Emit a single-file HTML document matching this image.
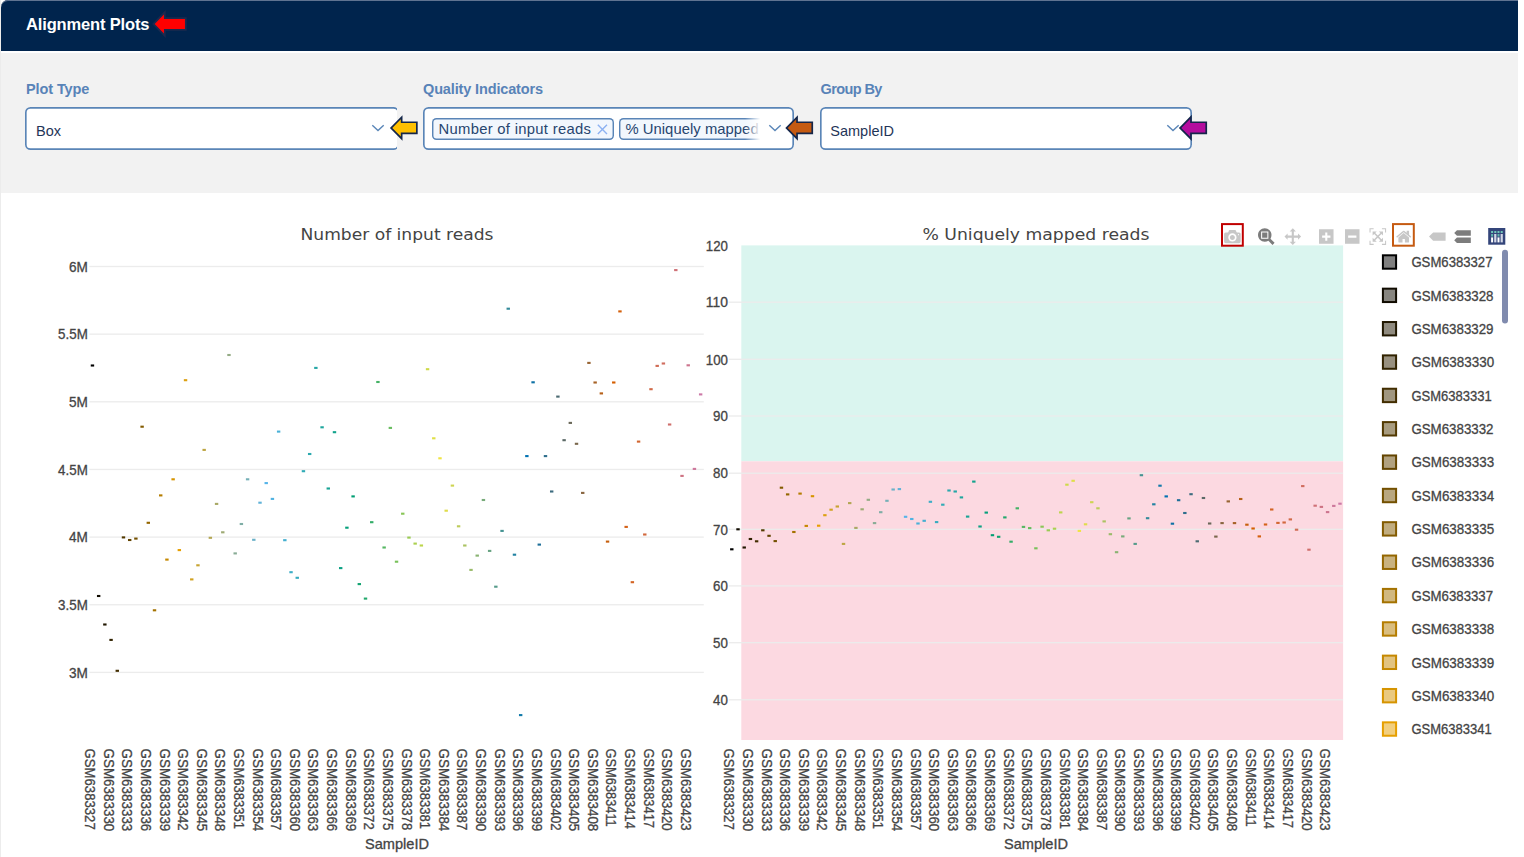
<!DOCTYPE html>
<html lang="en"><head><meta charset="utf-8"><title>Alignment Plots</title>
<style>
html,body{margin:0;padding:0;background:#fff;}
body{width:1524px;height:857px;overflow:hidden;position:relative;font-family:'Liberation Sans', sans-serif;}
.card{position:absolute;left:0;top:0;width:1517px;height:857px;border-left:1px solid #ececec;}
.hdr{position:absolute;left:0;top:0;width:1517px;height:51px;background:#00244d;border-top-left-radius:7px;box-shadow:inset 0 1px 0 #5f7391;}
.hdr h1{position:absolute;left:25px;top:13.5px;margin:0;font-size:16.5px;line-height:20px;font-weight:bold;color:#fff;white-space:nowrap;letter-spacing:-0.15px}
.panel{position:absolute;left:0;top:53px;width:1517px;height:139.5px;background:#f2f2f2;}
.lbl{position:absolute;top:78.6px;font-size:14.5px;line-height:20px;font-weight:bold;color:#5883b8;white-space:nowrap;}
.clip{position:absolute;top:105px;height:48px;overflow:hidden;}
.sel{position:absolute;top:107px;height:43px;width:372px;box-sizing:border-box;background:#fff;border-radius:5.5px;box-shadow:inset 0 0 0 1.65px #5a85b7;}
.clip .sel{top:2px;left:0;width:374px}
.sel .val{position:absolute;left:11px;top:13.9px;font-size:14.5px;line-height:20px;color:#1f3558;white-space:nowrap;}
.chev{position:absolute;left:345.8px;top:17px;width:14px;height:8px;}
.chip{position:absolute;top:11px;height:22px;box-sizing:border-box;border-radius:4.5px;background:#f2f7fd;box-shadow:inset 0 0 0 1.45px #5a85b7;font-size:14.8px;line-height:18px;color:#27456f;white-space:nowrap;overflow:hidden;}
.chip span{position:absolute;top:1.6px;}
.fade{position:absolute;top:9.3px;left:322px;width:19px;height:26px;background:linear-gradient(to right,rgba(255,255,255,0),#fff 80%);}
svg.plot{position:absolute;left:0;top:0;}
svg.ov{position:absolute;left:0;top:0;}
</style></head><body>
<div class="card">
 <div class="hdr"><h1>Alignment Plots</h1></div>
 <div class="panel"></div>
 <div class="lbl" style="left:25px;letter-spacing:-0.1px">Plot Type</div>
 <div class="lbl" style="left:422px;letter-spacing:-0.14px">Quality Indicators</div>
 <div class="lbl" style="left:819.5px;letter-spacing:-0.6px">Group By</div>
 <div class="clip" style="left:24px;width:372px"><div class="sel"><span class="val">Box</span><svg class="chev" style="left:346.3px" viewBox="0 0 14 8"><path d="M1.3 1.2 L7 6.6 L12.7 1.2" fill="none" stroke="#5a86b8" stroke-width="1.4"/></svg></div></div>
 <div class="sel" style="left:422px;width:371px">
   <div class="chip" style="left:9px;width:182px"><span style="left:6.5px;letter-spacing:0.3px">Number of input reads</span>
     <svg style="position:absolute;left:164.8px;top:6.4px" width="11" height="11" viewBox="0 0 11 11"><path d="M0.8 0.8 L10 10 M10 0.8 L0.8 10" stroke="#8db2f2" stroke-width="1.4" fill="none"/></svg></div>
   <div class="chip" style="left:196px;width:143px;border-radius:4.5px 0 0 4.5px"><span style="left:6.4px;letter-spacing:0.05px">% Uniquely mapped reads</span></div>
   <div class="fade"></div>
   <svg class="chev" style="left:345.3px" viewBox="0 0 14 8"><path d="M1.3 1.2 L7 6.6 L12.7 1.2" fill="none" stroke="#5a86b8" stroke-width="1.4"/></svg></div>
 <div class="sel" style="left:819px"><span class="val" style="left:10.3px">SampleID</span><svg class="chev" viewBox="0 0 14 8"><path d="M1.3 1.2 L7 6.6 L12.7 1.2" fill="none" stroke="#5a86b8" stroke-width="1.4"/></svg></div>
</div>
<svg class="plot" width="1524" height="857" viewBox="0 0 1524 857">
<rect x="741.3" y="245.4" width="601.8" height="215.9" fill="#daf5ef"/>
<rect x="741.3" y="461.3" width="601.8" height="278.7" fill="#fcd9e1"/>
<rect x="89.4" y="265.85" width="614.4" height="1.3" fill="#ececec"/>
<rect x="89.4" y="333.50" width="614.4" height="1.3" fill="#ececec"/>
<rect x="89.4" y="401.15" width="614.4" height="1.3" fill="#ececec"/>
<rect x="89.4" y="468.80" width="614.4" height="1.3" fill="#ececec"/>
<rect x="89.4" y="536.45" width="614.4" height="1.3" fill="#ececec"/>
<rect x="89.4" y="604.10" width="614.4" height="1.3" fill="#ececec"/>
<rect x="89.4" y="671.75" width="614.4" height="1.3" fill="#ececec"/>
<rect x="728.7" y="301.55" width="614.4" height="1.3" fill="#ececec"/>
<rect x="728.7" y="358.65" width="614.4" height="1.3" fill="#ececec"/>
<rect x="728.7" y="415.35" width="614.4" height="1.3" fill="#ececec"/>
<rect x="728.7" y="472.55" width="614.4" height="1.3" fill="#ececec"/>
<rect x="728.7" y="528.65" width="614.4" height="1.3" fill="#ececec"/>
<rect x="728.7" y="585.25" width="614.4" height="1.3" fill="#ececec"/>
<rect x="728.7" y="642.05" width="614.4" height="1.3" fill="#ececec"/>
<rect x="728.7" y="699.15" width="614.4" height="1.3" fill="#ececec"/>
<g font-family="'Liberation Sans', sans-serif" font-size="14.2" fill="#444444" stroke="#444444" stroke-width="0.3" text-anchor="end">
<text x="87.8" y="271.7" textLength="18.9" lengthAdjust="spacingAndGlyphs">6M</text>
<text x="87.8" y="339.3" textLength="29.7" lengthAdjust="spacingAndGlyphs">5.5M</text>
<text x="87.8" y="407.0" textLength="18.9" lengthAdjust="spacingAndGlyphs">5M</text>
<text x="87.8" y="474.7" textLength="29.7" lengthAdjust="spacingAndGlyphs">4.5M</text>
<text x="87.8" y="542.3" textLength="18.9" lengthAdjust="spacingAndGlyphs">4M</text>
<text x="87.8" y="610.0" textLength="29.7" lengthAdjust="spacingAndGlyphs">3.5M</text>
<text x="87.8" y="677.6" textLength="18.9" lengthAdjust="spacingAndGlyphs">3M</text>
<text x="727.9" y="250.6" textLength="22.1" lengthAdjust="spacingAndGlyphs">120</text>
<text x="727.9" y="307.4" textLength="22.1" lengthAdjust="spacingAndGlyphs">110</text>
<text x="727.9" y="364.5" textLength="22.1" lengthAdjust="spacingAndGlyphs">100</text>
<text x="727.9" y="421.2" textLength="14.8" lengthAdjust="spacingAndGlyphs">90</text>
<text x="727.9" y="478.4" textLength="14.8" lengthAdjust="spacingAndGlyphs">80</text>
<text x="727.9" y="534.5" textLength="14.8" lengthAdjust="spacingAndGlyphs">70</text>
<text x="727.9" y="591.1" textLength="14.8" lengthAdjust="spacingAndGlyphs">60</text>
<text x="727.9" y="647.9" textLength="14.8" lengthAdjust="spacingAndGlyphs">50</text>
<text x="727.9" y="705.0" textLength="14.8" lengthAdjust="spacingAndGlyphs">40</text>
</g>
<g font-family="'DejaVu Sans', sans-serif" font-size="16" fill="#444444" text-anchor="middle">
<text x="397" y="239.9" textLength="193" lengthAdjust="spacingAndGlyphs">Number of input reads</text>
<text x="1036" y="239.9" textLength="227" lengthAdjust="spacingAndGlyphs">% Uniquely mapped reads</text>
</g>
<g font-family="'Liberation Sans', sans-serif" font-size="14.2" fill="#444444" stroke="#444444" stroke-width="0.3">
<text transform="translate(85.05,748.6) rotate(90)" textLength="81.1" lengthAdjust="spacingAndGlyphs">GSM6383327</text>
<text transform="translate(103.67,748.6) rotate(90)" textLength="82.7" lengthAdjust="spacingAndGlyphs">GSM6383330</text>
<text transform="translate(122.29,748.6) rotate(90)" textLength="82.7" lengthAdjust="spacingAndGlyphs">GSM6383333</text>
<text transform="translate(140.90,748.6) rotate(90)" textLength="82.7" lengthAdjust="spacingAndGlyphs">GSM6383336</text>
<text transform="translate(159.52,748.6) rotate(90)" textLength="82.7" lengthAdjust="spacingAndGlyphs">GSM6383339</text>
<text transform="translate(178.14,748.6) rotate(90)" textLength="82.1" lengthAdjust="spacingAndGlyphs">GSM6383342</text>
<text transform="translate(196.76,748.6) rotate(90)" textLength="82.7" lengthAdjust="spacingAndGlyphs">GSM6383345</text>
<text transform="translate(215.38,748.6) rotate(90)" textLength="82.7" lengthAdjust="spacingAndGlyphs">GSM6383348</text>
<text transform="translate(233.99,748.6) rotate(90)" textLength="80.4" lengthAdjust="spacingAndGlyphs">GSM6383351</text>
<text transform="translate(252.61,748.6) rotate(90)" textLength="82.7" lengthAdjust="spacingAndGlyphs">GSM6383354</text>
<text transform="translate(271.23,748.6) rotate(90)" textLength="81.7" lengthAdjust="spacingAndGlyphs">GSM6383357</text>
<text transform="translate(289.85,748.6) rotate(90)" textLength="82.7" lengthAdjust="spacingAndGlyphs">GSM6383360</text>
<text transform="translate(308.47,748.6) rotate(90)" textLength="82.7" lengthAdjust="spacingAndGlyphs">GSM6383363</text>
<text transform="translate(327.08,748.6) rotate(90)" textLength="82.7" lengthAdjust="spacingAndGlyphs">GSM6383366</text>
<text transform="translate(345.70,748.6) rotate(90)" textLength="82.7" lengthAdjust="spacingAndGlyphs">GSM6383369</text>
<text transform="translate(364.32,748.6) rotate(90)" textLength="81.1" lengthAdjust="spacingAndGlyphs">GSM6383372</text>
<text transform="translate(382.94,748.6) rotate(90)" textLength="81.7" lengthAdjust="spacingAndGlyphs">GSM6383375</text>
<text transform="translate(401.56,748.6) rotate(90)" textLength="81.7" lengthAdjust="spacingAndGlyphs">GSM6383378</text>
<text transform="translate(420.17,748.6) rotate(90)" textLength="80.4" lengthAdjust="spacingAndGlyphs">GSM6383381</text>
<text transform="translate(438.79,748.6) rotate(90)" textLength="82.7" lengthAdjust="spacingAndGlyphs">GSM6383384</text>
<text transform="translate(457.41,748.6) rotate(90)" textLength="81.7" lengthAdjust="spacingAndGlyphs">GSM6383387</text>
<text transform="translate(476.03,748.6) rotate(90)" textLength="82.7" lengthAdjust="spacingAndGlyphs">GSM6383390</text>
<text transform="translate(494.65,748.6) rotate(90)" textLength="82.7" lengthAdjust="spacingAndGlyphs">GSM6383393</text>
<text transform="translate(513.26,748.6) rotate(90)" textLength="82.7" lengthAdjust="spacingAndGlyphs">GSM6383396</text>
<text transform="translate(531.88,748.6) rotate(90)" textLength="82.7" lengthAdjust="spacingAndGlyphs">GSM6383399</text>
<text transform="translate(550.50,748.6) rotate(90)" textLength="82.1" lengthAdjust="spacingAndGlyphs">GSM6383402</text>
<text transform="translate(569.12,748.6) rotate(90)" textLength="82.7" lengthAdjust="spacingAndGlyphs">GSM6383405</text>
<text transform="translate(587.74,748.6) rotate(90)" textLength="82.7" lengthAdjust="spacingAndGlyphs">GSM6383408</text>
<text transform="translate(606.35,748.6) rotate(90)" textLength="78.1" lengthAdjust="spacingAndGlyphs">GSM6383411</text>
<text transform="translate(624.97,748.6) rotate(90)" textLength="80.4" lengthAdjust="spacingAndGlyphs">GSM6383414</text>
<text transform="translate(643.59,748.6) rotate(90)" textLength="79.4" lengthAdjust="spacingAndGlyphs">GSM6383417</text>
<text transform="translate(662.21,748.6) rotate(90)" textLength="82.1" lengthAdjust="spacingAndGlyphs">GSM6383420</text>
<text transform="translate(680.83,748.6) rotate(90)" textLength="82.1" lengthAdjust="spacingAndGlyphs">GSM6383423</text>
<text transform="translate(724.40,748.6) rotate(90)" textLength="81.1" lengthAdjust="spacingAndGlyphs">GSM6383327</text>
<text transform="translate(743.02,748.6) rotate(90)" textLength="82.7" lengthAdjust="spacingAndGlyphs">GSM6383330</text>
<text transform="translate(761.64,748.6) rotate(90)" textLength="82.7" lengthAdjust="spacingAndGlyphs">GSM6383333</text>
<text transform="translate(780.25,748.6) rotate(90)" textLength="82.7" lengthAdjust="spacingAndGlyphs">GSM6383336</text>
<text transform="translate(798.87,748.6) rotate(90)" textLength="82.7" lengthAdjust="spacingAndGlyphs">GSM6383339</text>
<text transform="translate(817.49,748.6) rotate(90)" textLength="82.1" lengthAdjust="spacingAndGlyphs">GSM6383342</text>
<text transform="translate(836.11,748.6) rotate(90)" textLength="82.7" lengthAdjust="spacingAndGlyphs">GSM6383345</text>
<text transform="translate(854.73,748.6) rotate(90)" textLength="82.7" lengthAdjust="spacingAndGlyphs">GSM6383348</text>
<text transform="translate(873.34,748.6) rotate(90)" textLength="80.4" lengthAdjust="spacingAndGlyphs">GSM6383351</text>
<text transform="translate(891.96,748.6) rotate(90)" textLength="82.7" lengthAdjust="spacingAndGlyphs">GSM6383354</text>
<text transform="translate(910.58,748.6) rotate(90)" textLength="81.7" lengthAdjust="spacingAndGlyphs">GSM6383357</text>
<text transform="translate(929.20,748.6) rotate(90)" textLength="82.7" lengthAdjust="spacingAndGlyphs">GSM6383360</text>
<text transform="translate(947.82,748.6) rotate(90)" textLength="82.7" lengthAdjust="spacingAndGlyphs">GSM6383363</text>
<text transform="translate(966.43,748.6) rotate(90)" textLength="82.7" lengthAdjust="spacingAndGlyphs">GSM6383366</text>
<text transform="translate(985.05,748.6) rotate(90)" textLength="82.7" lengthAdjust="spacingAndGlyphs">GSM6383369</text>
<text transform="translate(1003.67,748.6) rotate(90)" textLength="81.1" lengthAdjust="spacingAndGlyphs">GSM6383372</text>
<text transform="translate(1022.29,748.6) rotate(90)" textLength="81.7" lengthAdjust="spacingAndGlyphs">GSM6383375</text>
<text transform="translate(1040.91,748.6) rotate(90)" textLength="81.7" lengthAdjust="spacingAndGlyphs">GSM6383378</text>
<text transform="translate(1059.52,748.6) rotate(90)" textLength="80.4" lengthAdjust="spacingAndGlyphs">GSM6383381</text>
<text transform="translate(1078.14,748.6) rotate(90)" textLength="82.7" lengthAdjust="spacingAndGlyphs">GSM6383384</text>
<text transform="translate(1096.76,748.6) rotate(90)" textLength="81.7" lengthAdjust="spacingAndGlyphs">GSM6383387</text>
<text transform="translate(1115.38,748.6) rotate(90)" textLength="82.7" lengthAdjust="spacingAndGlyphs">GSM6383390</text>
<text transform="translate(1134.00,748.6) rotate(90)" textLength="82.7" lengthAdjust="spacingAndGlyphs">GSM6383393</text>
<text transform="translate(1152.61,748.6) rotate(90)" textLength="82.7" lengthAdjust="spacingAndGlyphs">GSM6383396</text>
<text transform="translate(1171.23,748.6) rotate(90)" textLength="82.7" lengthAdjust="spacingAndGlyphs">GSM6383399</text>
<text transform="translate(1189.85,748.6) rotate(90)" textLength="82.1" lengthAdjust="spacingAndGlyphs">GSM6383402</text>
<text transform="translate(1208.47,748.6) rotate(90)" textLength="82.7" lengthAdjust="spacingAndGlyphs">GSM6383405</text>
<text transform="translate(1227.09,748.6) rotate(90)" textLength="82.7" lengthAdjust="spacingAndGlyphs">GSM6383408</text>
<text transform="translate(1245.70,748.6) rotate(90)" textLength="78.1" lengthAdjust="spacingAndGlyphs">GSM6383411</text>
<text transform="translate(1264.32,748.6) rotate(90)" textLength="80.4" lengthAdjust="spacingAndGlyphs">GSM6383414</text>
<text transform="translate(1282.94,748.6) rotate(90)" textLength="79.4" lengthAdjust="spacingAndGlyphs">GSM6383417</text>
<text transform="translate(1301.56,748.6) rotate(90)" textLength="82.1" lengthAdjust="spacingAndGlyphs">GSM6383420</text>
<text transform="translate(1320.18,748.6) rotate(90)" textLength="82.1" lengthAdjust="spacingAndGlyphs">GSM6383423</text>
</g>
<g font-family="'Liberation Sans', sans-serif" font-size="14.2" fill="#444444" stroke="#444444" stroke-width="0.3" text-anchor="middle">
<text x="397" y="848.5" textLength="64" lengthAdjust="spacingAndGlyphs">SampleID</text>
<text x="1036" y="848.5" textLength="64" lengthAdjust="spacingAndGlyphs">SampleID</text>
</g>
<rect x="90.75" y="364.45" width="3.4" height="2.1" fill="#000000"/>
<rect x="96.96" y="594.95" width="3.4" height="2.1" fill="#100b00"/>
<rect x="103.16" y="623.45" width="3.4" height="2.1" fill="#211700"/>
<rect x="109.37" y="638.85" width="3.4" height="2.1" fill="#312200"/>
<rect x="115.57" y="669.75" width="3.4" height="2.1" fill="#422d00"/>
<rect x="121.78" y="536.35" width="3.4" height="2.1" fill="#523900"/>
<rect x="127.99" y="538.95" width="3.4" height="2.1" fill="#634400"/>
<rect x="134.19" y="537.55" width="3.4" height="2.1" fill="#735000"/>
<rect x="140.40" y="425.65" width="3.4" height="2.1" fill="#835b00"/>
<rect x="146.60" y="521.75" width="3.4" height="2.1" fill="#946600"/>
<rect x="152.81" y="609.25" width="3.4" height="2.1" fill="#a47200"/>
<rect x="159.02" y="494.35" width="3.4" height="2.1" fill="#b57d00"/>
<rect x="165.22" y="558.55" width="3.4" height="2.1" fill="#c58800"/>
<rect x="171.43" y="478.25" width="3.4" height="2.1" fill="#d69400"/>
<rect x="177.63" y="549.05" width="3.4" height="2.1" fill="#e69f00"/>
<rect x="183.84" y="379.15" width="3.4" height="2.1" fill="#dca011"/>
<rect x="190.05" y="578.35" width="3.4" height="2.1" fill="#d1a221"/>
<rect x="196.25" y="564.25" width="3.4" height="2.1" fill="#c7a432"/>
<rect x="202.46" y="448.85" width="3.4" height="2.1" fill="#bda543"/>
<rect x="208.66" y="536.75" width="3.4" height="2.1" fill="#b3a653"/>
<rect x="214.87" y="502.85" width="3.4" height="2.1" fill="#a8a864"/>
<rect x="221.08" y="531.25" width="3.4" height="2.1" fill="#9eaa74"/>
<rect x="227.28" y="353.95" width="3.4" height="2.1" fill="#94ab85"/>
<rect x="233.49" y="552.35" width="3.4" height="2.1" fill="#89ac96"/>
<rect x="239.69" y="522.95" width="3.4" height="2.1" fill="#7faea6"/>
<rect x="245.90" y="478.25" width="3.4" height="2.1" fill="#75b0b7"/>
<rect x="252.11" y="538.75" width="3.4" height="2.1" fill="#6bb1c8"/>
<rect x="258.31" y="501.65" width="3.4" height="2.1" fill="#60b2d8"/>
<rect x="264.52" y="482.05" width="3.4" height="2.1" fill="#56b4e9"/>
<rect x="270.72" y="497.85" width="3.4" height="2.1" fill="#50b2e1"/>
<rect x="276.93" y="430.55" width="3.4" height="2.1" fill="#4ab1d8"/>
<rect x="283.14" y="539.15" width="3.4" height="2.1" fill="#44afd0"/>
<rect x="289.34" y="571.15" width="3.4" height="2.1" fill="#3daec7"/>
<rect x="295.55" y="576.75" width="3.4" height="2.1" fill="#37acbf"/>
<rect x="301.75" y="470.15" width="3.4" height="2.1" fill="#31abb6"/>
<rect x="307.96" y="452.95" width="3.4" height="2.1" fill="#2ba9ae"/>
<rect x="314.17" y="366.85" width="3.4" height="2.1" fill="#25a7a6"/>
<rect x="320.37" y="426.25" width="3.4" height="2.1" fill="#1fa69d"/>
<rect x="326.58" y="487.45" width="3.4" height="2.1" fill="#19a495"/>
<rect x="332.78" y="431.15" width="3.4" height="2.1" fill="#12a38c"/>
<rect x="338.99" y="567.05" width="3.4" height="2.1" fill="#0ca184"/>
<rect x="345.20" y="526.65" width="3.4" height="2.1" fill="#06a07b"/>
<rect x="351.40" y="495.35" width="3.4" height="2.1" fill="#009e73"/>
<rect x="357.61" y="583.05" width="3.4" height="2.1" fill="#11a370"/>
<rect x="363.81" y="597.55" width="3.4" height="2.1" fill="#22a86c"/>
<rect x="370.02" y="521.15" width="3.4" height="2.1" fill="#33ad68"/>
<rect x="376.23" y="380.95" width="3.4" height="2.1" fill="#45b265"/>
<rect x="382.43" y="546.45" width="3.4" height="2.1" fill="#56b762"/>
<rect x="388.64" y="426.85" width="3.4" height="2.1" fill="#67bc5e"/>
<rect x="394.84" y="560.65" width="3.4" height="2.1" fill="#78c15a"/>
<rect x="401.05" y="512.65" width="3.4" height="2.1" fill="#89c657"/>
<rect x="407.26" y="536.55" width="3.4" height="2.1" fill="#9acb53"/>
<rect x="413.46" y="542.55" width="3.4" height="2.1" fill="#abd050"/>
<rect x="419.67" y="544.45" width="3.4" height="2.1" fill="#bdd54c"/>
<rect x="425.87" y="368.15" width="3.4" height="2.1" fill="#ceda49"/>
<rect x="432.08" y="437.25" width="3.4" height="2.1" fill="#dfdf46"/>
<rect x="438.29" y="457.25" width="3.4" height="2.1" fill="#f0e442"/>
<rect x="444.49" y="509.65" width="3.4" height="2.1" fill="#dfdc4a"/>
<rect x="450.70" y="484.55" width="3.4" height="2.1" fill="#ced452"/>
<rect x="456.90" y="525.25" width="3.4" height="2.1" fill="#bdcc5a"/>
<rect x="463.11" y="544.45" width="3.4" height="2.1" fill="#abc362"/>
<rect x="469.32" y="568.85" width="3.4" height="2.1" fill="#9abb6a"/>
<rect x="475.52" y="554.55" width="3.4" height="2.1" fill="#89b372"/>
<rect x="481.73" y="498.95" width="3.4" height="2.1" fill="#78ab7a"/>
<rect x="487.93" y="549.85" width="3.4" height="2.1" fill="#67a382"/>
<rect x="494.14" y="585.65" width="3.4" height="2.1" fill="#569b8a"/>
<rect x="500.35" y="529.85" width="3.4" height="2.1" fill="#459392"/>
<rect x="506.55" y="307.65" width="3.4" height="2.1" fill="#338a9a"/>
<rect x="512.76" y="553.65" width="3.4" height="2.1" fill="#2282a2"/>
<rect x="518.96" y="714.05" width="3.4" height="2.1" fill="#117aaa"/>
<rect x="525.17" y="455.05" width="3.4" height="2.1" fill="#0072b2"/>
<rect x="531.38" y="381.25" width="3.4" height="2.1" fill="#0f71a5"/>
<rect x="537.58" y="543.55" width="3.4" height="2.1" fill="#1e6f99"/>
<rect x="543.79" y="455.05" width="3.4" height="2.1" fill="#2e6e8c"/>
<rect x="549.99" y="490.45" width="3.4" height="2.1" fill="#3d6c7f"/>
<rect x="556.20" y="395.55" width="3.4" height="2.1" fill="#4c6b72"/>
<rect x="562.41" y="439.15" width="3.4" height="2.1" fill="#5b6966"/>
<rect x="568.61" y="421.85" width="3.4" height="2.1" fill="#6a6859"/>
<rect x="574.82" y="442.75" width="3.4" height="2.1" fill="#7a674c"/>
<rect x="581.02" y="491.85" width="3.4" height="2.1" fill="#896540"/>
<rect x="587.23" y="361.85" width="3.4" height="2.1" fill="#986433"/>
<rect x="593.44" y="381.45" width="3.4" height="2.1" fill="#a76226"/>
<rect x="599.64" y="392.35" width="3.4" height="2.1" fill="#b76119"/>
<rect x="605.85" y="540.55" width="3.4" height="2.1" fill="#c65f0d"/>
<rect x="612.05" y="381.45" width="3.4" height="2.1" fill="#d55e00"/>
<rect x="618.26" y="310.35" width="3.4" height="2.1" fill="#d4600c"/>
<rect x="624.47" y="525.85" width="3.4" height="2.1" fill="#d46218"/>
<rect x="630.67" y="581.15" width="3.4" height="2.1" fill="#d36424"/>
<rect x="636.88" y="440.55" width="3.4" height="2.1" fill="#d26630"/>
<rect x="643.08" y="533.45" width="3.4" height="2.1" fill="#d2683c"/>
<rect x="649.29" y="388.15" width="3.4" height="2.1" fill="#d16a48"/>
<rect x="655.50" y="364.85" width="3.4" height="2.1" fill="#d06c54"/>
<rect x="661.70" y="362.45" width="3.4" height="2.1" fill="#d06d5f"/>
<rect x="667.91" y="423.45" width="3.4" height="2.1" fill="#cf6f6b"/>
<rect x="674.11" y="269.05" width="3.4" height="2.1" fill="#cf7177"/>
<rect x="680.32" y="474.85" width="3.4" height="2.1" fill="#ce7383"/>
<rect x="686.53" y="364.25" width="3.4" height="2.1" fill="#cd758f"/>
<rect x="692.73" y="467.85" width="3.4" height="2.1" fill="#cd779b"/>
<rect x="698.94" y="393.35" width="3.4" height="2.1" fill="#cc79a7"/>
<rect x="730.10" y="548.25" width="3.4" height="2.1" fill="#000000"/>
<rect x="736.31" y="528.25" width="3.4" height="2.1" fill="#100b00"/>
<rect x="742.51" y="546.45" width="3.4" height="2.1" fill="#211700"/>
<rect x="748.72" y="537.95" width="3.4" height="2.1" fill="#312200"/>
<rect x="754.92" y="540.25" width="3.4" height="2.1" fill="#422d00"/>
<rect x="761.13" y="529.25" width="3.4" height="2.1" fill="#523900"/>
<rect x="767.34" y="534.75" width="3.4" height="2.1" fill="#634400"/>
<rect x="773.54" y="540.05" width="3.4" height="2.1" fill="#735000"/>
<rect x="779.75" y="486.65" width="3.4" height="2.1" fill="#835b00"/>
<rect x="785.95" y="493.35" width="3.4" height="2.1" fill="#946600"/>
<rect x="792.16" y="530.95" width="3.4" height="2.1" fill="#a47200"/>
<rect x="798.37" y="492.55" width="3.4" height="2.1" fill="#b57d00"/>
<rect x="804.57" y="524.85" width="3.4" height="2.1" fill="#c58800"/>
<rect x="810.78" y="495.15" width="3.4" height="2.1" fill="#d69400"/>
<rect x="816.98" y="524.65" width="3.4" height="2.1" fill="#e69f00"/>
<rect x="823.19" y="514.15" width="3.4" height="2.1" fill="#dca011"/>
<rect x="829.40" y="508.65" width="3.4" height="2.1" fill="#d1a221"/>
<rect x="835.60" y="505.45" width="3.4" height="2.1" fill="#c7a432"/>
<rect x="841.81" y="542.85" width="3.4" height="2.1" fill="#bda543"/>
<rect x="848.01" y="502.05" width="3.4" height="2.1" fill="#b3a653"/>
<rect x="854.22" y="526.85" width="3.4" height="2.1" fill="#a8a864"/>
<rect x="860.43" y="508.25" width="3.4" height="2.1" fill="#9eaa74"/>
<rect x="866.63" y="498.75" width="3.4" height="2.1" fill="#94ab85"/>
<rect x="872.84" y="522.05" width="3.4" height="2.1" fill="#89ac96"/>
<rect x="879.04" y="511.15" width="3.4" height="2.1" fill="#7faea6"/>
<rect x="885.25" y="499.75" width="3.4" height="2.1" fill="#75b0b7"/>
<rect x="891.46" y="488.45" width="3.4" height="2.1" fill="#6bb1c8"/>
<rect x="897.66" y="488.05" width="3.4" height="2.1" fill="#60b2d8"/>
<rect x="903.87" y="515.75" width="3.4" height="2.1" fill="#56b4e9"/>
<rect x="910.07" y="517.95" width="3.4" height="2.1" fill="#50b2e1"/>
<rect x="916.28" y="522.45" width="3.4" height="2.1" fill="#4ab1d8"/>
<rect x="922.49" y="519.75" width="3.4" height="2.1" fill="#44afd0"/>
<rect x="928.69" y="500.75" width="3.4" height="2.1" fill="#3daec7"/>
<rect x="934.90" y="521.05" width="3.4" height="2.1" fill="#37acbf"/>
<rect x="941.10" y="503.65" width="3.4" height="2.1" fill="#31abb6"/>
<rect x="947.31" y="489.45" width="3.4" height="2.1" fill="#2ba9ae"/>
<rect x="953.52" y="490.45" width="3.4" height="2.1" fill="#25a7a6"/>
<rect x="959.72" y="496.35" width="3.4" height="2.1" fill="#1fa69d"/>
<rect x="965.93" y="515.55" width="3.4" height="2.1" fill="#19a495"/>
<rect x="972.13" y="480.55" width="3.4" height="2.1" fill="#12a38c"/>
<rect x="978.34" y="525.45" width="3.4" height="2.1" fill="#0ca184"/>
<rect x="984.55" y="511.55" width="3.4" height="2.1" fill="#06a07b"/>
<rect x="990.75" y="534.15" width="3.4" height="2.1" fill="#009e73"/>
<rect x="996.96" y="535.75" width="3.4" height="2.1" fill="#11a370"/>
<rect x="1003.16" y="516.35" width="3.4" height="2.1" fill="#22a86c"/>
<rect x="1009.37" y="540.65" width="3.4" height="2.1" fill="#33ad68"/>
<rect x="1015.58" y="507.25" width="3.4" height="2.1" fill="#45b265"/>
<rect x="1021.78" y="525.85" width="3.4" height="2.1" fill="#56b762"/>
<rect x="1027.99" y="527.05" width="3.4" height="2.1" fill="#67bc5e"/>
<rect x="1034.19" y="547.25" width="3.4" height="2.1" fill="#78c15a"/>
<rect x="1040.40" y="525.65" width="3.4" height="2.1" fill="#89c657"/>
<rect x="1046.61" y="529.25" width="3.4" height="2.1" fill="#9acb53"/>
<rect x="1052.81" y="527.65" width="3.4" height="2.1" fill="#abd050"/>
<rect x="1059.02" y="511.35" width="3.4" height="2.1" fill="#bdd54c"/>
<rect x="1065.22" y="483.65" width="3.4" height="2.1" fill="#ceda49"/>
<rect x="1071.43" y="479.75" width="3.4" height="2.1" fill="#dfdf46"/>
<rect x="1077.64" y="529.85" width="3.4" height="2.1" fill="#f0e442"/>
<rect x="1083.84" y="523.25" width="3.4" height="2.1" fill="#dfdc4a"/>
<rect x="1090.05" y="501.15" width="3.4" height="2.1" fill="#ced452"/>
<rect x="1096.25" y="507.25" width="3.4" height="2.1" fill="#bdcc5a"/>
<rect x="1102.46" y="520.35" width="3.4" height="2.1" fill="#abc362"/>
<rect x="1108.67" y="533.15" width="3.4" height="2.1" fill="#9abb6a"/>
<rect x="1114.87" y="551.15" width="3.4" height="2.1" fill="#89b372"/>
<rect x="1121.08" y="535.35" width="3.4" height="2.1" fill="#78ab7a"/>
<rect x="1127.28" y="517.35" width="3.4" height="2.1" fill="#67a382"/>
<rect x="1133.49" y="542.85" width="3.4" height="2.1" fill="#569b8a"/>
<rect x="1139.70" y="474.15" width="3.4" height="2.1" fill="#459392"/>
<rect x="1145.90" y="517.15" width="3.4" height="2.1" fill="#338a9a"/>
<rect x="1152.11" y="503.25" width="3.4" height="2.1" fill="#2282a2"/>
<rect x="1158.31" y="484.65" width="3.4" height="2.1" fill="#117aaa"/>
<rect x="1164.52" y="495.35" width="3.4" height="2.1" fill="#0072b2"/>
<rect x="1170.73" y="522.65" width="3.4" height="2.1" fill="#0f71a5"/>
<rect x="1176.93" y="499.15" width="3.4" height="2.1" fill="#1e6f99"/>
<rect x="1183.14" y="511.95" width="3.4" height="2.1" fill="#2e6e8c"/>
<rect x="1189.34" y="493.15" width="3.4" height="2.1" fill="#3d6c7f"/>
<rect x="1195.55" y="540.25" width="3.4" height="2.1" fill="#4c6b72"/>
<rect x="1201.76" y="496.95" width="3.4" height="2.1" fill="#5b6966"/>
<rect x="1207.96" y="522.45" width="3.4" height="2.1" fill="#6a6859"/>
<rect x="1214.17" y="535.55" width="3.4" height="2.1" fill="#7a674c"/>
<rect x="1220.37" y="522.05" width="3.4" height="2.1" fill="#896540"/>
<rect x="1226.58" y="500.35" width="3.4" height="2.1" fill="#986433"/>
<rect x="1232.79" y="522.05" width="3.4" height="2.1" fill="#a76226"/>
<rect x="1238.99" y="497.95" width="3.4" height="2.1" fill="#b76119"/>
<rect x="1245.20" y="523.65" width="3.4" height="2.1" fill="#c65f0d"/>
<rect x="1251.40" y="527.45" width="3.4" height="2.1" fill="#d55e00"/>
<rect x="1257.61" y="535.35" width="3.4" height="2.1" fill="#d4600c"/>
<rect x="1263.82" y="523.45" width="3.4" height="2.1" fill="#d46218"/>
<rect x="1270.02" y="508.45" width="3.4" height="2.1" fill="#d36424"/>
<rect x="1276.23" y="521.85" width="3.4" height="2.1" fill="#d26630"/>
<rect x="1282.43" y="521.45" width="3.4" height="2.1" fill="#d2683c"/>
<rect x="1288.64" y="518.35" width="3.4" height="2.1" fill="#d16a48"/>
<rect x="1294.85" y="528.65" width="3.4" height="2.1" fill="#d06c54"/>
<rect x="1301.05" y="485.05" width="3.4" height="2.1" fill="#d06d5f"/>
<rect x="1307.26" y="548.65" width="3.4" height="2.1" fill="#cf6f6b"/>
<rect x="1313.46" y="504.65" width="3.4" height="2.1" fill="#cf7177"/>
<rect x="1319.67" y="505.85" width="3.4" height="2.1" fill="#ce7383"/>
<rect x="1325.88" y="511.05" width="3.4" height="2.1" fill="#cd758f"/>
<rect x="1332.08" y="504.85" width="3.4" height="2.1" fill="#cd779b"/>
<rect x="1338.29" y="502.65" width="3.4" height="2.1" fill="#cc79a7"/>
<g font-family="'Liberation Sans', sans-serif" font-size="14.2" fill="#444444" stroke="#444444" stroke-width="0.3">
<rect x="1382.9" y="255.30" width="13.2" height="13.4" fill="rgb(0, 0, 0)" fill-opacity="0.5" stroke="#000000" stroke-width="2"/>
<text x="1411.4" y="267.2" textLength="81.1" lengthAdjust="spacingAndGlyphs">GSM6383327</text>
<rect x="1382.9" y="288.66" width="13.2" height="13.4" fill="rgb(16, 11, 0)" fill-opacity="0.5" stroke="#100b00" stroke-width="2"/>
<text x="1411.4" y="300.6" textLength="82.1" lengthAdjust="spacingAndGlyphs">GSM6383328</text>
<rect x="1382.9" y="322.02" width="13.2" height="13.4" fill="rgb(33, 23, 0)" fill-opacity="0.5" stroke="#211700" stroke-width="2"/>
<text x="1411.4" y="333.9" textLength="82.1" lengthAdjust="spacingAndGlyphs">GSM6383329</text>
<rect x="1382.9" y="355.38" width="13.2" height="13.4" fill="rgb(49, 34, 0)" fill-opacity="0.5" stroke="#312200" stroke-width="2"/>
<text x="1411.4" y="367.3" textLength="82.7" lengthAdjust="spacingAndGlyphs">GSM6383330</text>
<rect x="1382.9" y="388.74" width="13.2" height="13.4" fill="rgb(66, 45, 0)" fill-opacity="0.5" stroke="#422d00" stroke-width="2"/>
<text x="1411.4" y="400.6" textLength="80.4" lengthAdjust="spacingAndGlyphs">GSM6383331</text>
<rect x="1382.9" y="422.10" width="13.2" height="13.4" fill="rgb(82, 57, 0)" fill-opacity="0.5" stroke="#523900" stroke-width="2"/>
<text x="1411.4" y="434.0" textLength="82.1" lengthAdjust="spacingAndGlyphs">GSM6383332</text>
<rect x="1382.9" y="455.46" width="13.2" height="13.4" fill="rgb(99, 68, 0)" fill-opacity="0.5" stroke="#634400" stroke-width="2"/>
<text x="1411.4" y="467.4" textLength="82.7" lengthAdjust="spacingAndGlyphs">GSM6383333</text>
<rect x="1382.9" y="488.82" width="13.2" height="13.4" fill="rgb(115, 80, 0)" fill-opacity="0.5" stroke="#735000" stroke-width="2"/>
<text x="1411.4" y="500.7" textLength="82.7" lengthAdjust="spacingAndGlyphs">GSM6383334</text>
<rect x="1382.9" y="522.18" width="13.2" height="13.4" fill="rgb(131, 91, 0)" fill-opacity="0.5" stroke="#835b00" stroke-width="2"/>
<text x="1411.4" y="534.1" textLength="82.7" lengthAdjust="spacingAndGlyphs">GSM6383335</text>
<rect x="1382.9" y="555.54" width="13.2" height="13.4" fill="rgb(148, 102, 0)" fill-opacity="0.5" stroke="#946600" stroke-width="2"/>
<text x="1411.4" y="567.4" textLength="82.7" lengthAdjust="spacingAndGlyphs">GSM6383336</text>
<rect x="1382.9" y="588.90" width="13.2" height="13.4" fill="rgb(164, 114, 0)" fill-opacity="0.5" stroke="#a47200" stroke-width="2"/>
<text x="1411.4" y="600.8" textLength="81.7" lengthAdjust="spacingAndGlyphs">GSM6383337</text>
<rect x="1382.9" y="622.26" width="13.2" height="13.4" fill="rgb(181, 125, 0)" fill-opacity="0.5" stroke="#b57d00" stroke-width="2"/>
<text x="1411.4" y="634.2" textLength="82.7" lengthAdjust="spacingAndGlyphs">GSM6383338</text>
<rect x="1382.9" y="655.62" width="13.2" height="13.4" fill="rgb(197, 136, 0)" fill-opacity="0.5" stroke="#c58800" stroke-width="2"/>
<text x="1411.4" y="667.5" textLength="82.7" lengthAdjust="spacingAndGlyphs">GSM6383339</text>
<rect x="1382.9" y="688.98" width="13.2" height="13.4" fill="rgb(214, 148, 0)" fill-opacity="0.5" stroke="#d69400" stroke-width="2"/>
<text x="1411.4" y="700.9" textLength="82.7" lengthAdjust="spacingAndGlyphs">GSM6383340</text>
<rect x="1382.9" y="722.34" width="13.2" height="13.4" fill="rgb(230, 159, 0)" fill-opacity="0.5" stroke="#e69f00" stroke-width="2"/>
<text x="1411.4" y="734.2" textLength="80.4" lengthAdjust="spacingAndGlyphs">GSM6383341</text>
</g>
<rect x="1502" y="249.7" width="6" height="73.7" rx="3" ry="3" fill="#808bae"/>
<path transform="translate(1224.1,228.30) scale(0.01660) matrix(1 0 0 -1 0 850)" d="m500 450c-83 0-150-67-150-150 0-83 67-150 150-150 83 0 150 67 150 150 0 83-67 150-150 150z m400 150h-120c-16 0-34 13-39 29l-31 93c-6 15-23 28-40 28h-340c-16 0-34-13-39-28l-31-94c-6-15-23-28-40-28h-120c-55 0-100-45-100-100v-450c0-55 45-100 100-100h800c55 0 100 45 100 100v450c0 55-45 100-100 100z m-400-550c-138 0-250 112-250 250 0 138 112 250 250 250 138 0 250-112 250-250 0-138-112-250-250-250z m365 380c-19 0-35 16-35 35 0 19 16 35 35 35 19 0 35-16 35-35 0-19-16-35-35-35z" fill="#444" fill-opacity="0.3"/>
<path transform="translate(1258.0,228.30) scale(0.01660) matrix(1 0 0 -1 0 850)" d="m1000-25l-250 251c40 63 63 138 63 218 0 224-182 406-407 406-224 0-406-182-406-406s183-406 407-406c80 0 155 22 218 62l250-250 125 125z m-812 250l0 438 437 0 0-438-437 0z m62 375l313 0 0-312-313 0 0 312z" fill="#444" fill-opacity="0.7"/>
<path transform="translate(1284.5,228.30) scale(0.01660) matrix(1 0 0 -1 0 850)" d="m1000 350l-187 188 0-125-250 0 0 250 125 0-188 187-187-187 125 0 0-250-250 0 0 125-188-188 186-187 0 125 252 0 0-250-125 0 187-188 188 188-125 0 0 250 250 0 0-126 187 188z" fill="#444" fill-opacity="0.3"/>
<path transform="translate(1319.0,228.30) scale(0.01660) matrix(1 0 0 -1 0 850)" d="m1 787l0-875 875 0 0 875-875 0z m687-500l-187 0 0-187-125 0 0 187-188 0 0 125 188 0 0 187 125 0 0-187 187 0 0-125z" fill="#444" fill-opacity="0.3"/>
<path transform="translate(1345.0,228.30) scale(0.01660) matrix(1 0 0 -1 0 850)" d="m0 788l0-876 875 0 0 876-875 0z m688-500l-500 0 0 125 500 0 0-125z" fill="#444" fill-opacity="0.3"/>
<path transform="translate(1369.5,228.30) scale(0.01660) matrix(1 0 0 -1 0 850)" d="m250 850l-187 0-63 0 0-62 0-188 63 0 0 188 187 0 0 62z m688 0l-188 0 0-62 188 0 0-188 62 0 0 188 0 62-62 0z m-875-938l0 188-63 0 0-188 0-62 63 0 187 0 0 62-187 0z m875 188l0-188-188 0 0-62 188 0 62 0 0 62 0 188-62 0z m-125 188l-1 0-93-94-156 156 156 156 92-93 2 0 0 250-250 0 0-2 93-92-156-156-156 156 94 92 0 2-250 0 0-250 0 0 93 93 157-156-157-156-93 94 0 0 0-250 250 0 0 0-94 93 156 157 156-157-93-93 0 0 250 0 0 250z" fill="#444" fill-opacity="0.3"/>
<path transform="translate(1396.0,228.30) scale(0.01660) matrix(1 0 0 -1 0 850)" d="m786 296v-267q0-15-11-26t-25-10h-214v214h-143v-214h-214q-15 0-25 10t-11 26v267q0 1 0 2t0 2l321 264 321-264q1-1 1-4z m124 39l-34-41q-5-5-12-6h-2q-7 0-12 3l-386 322-386-322q-7-4-13-4-7 2-12 7l-35 41q-4 5-3 13t6 12l401 334q18 15 42 15t43-15l136-114v109q0 8 5 13t13 5h107q8 0 13-5t5-13v-227l122-102q5-5 6-12t-4-13z" fill="#444" fill-opacity="0.3"/>
<path transform="translate(1429.0,231.07) scale(0.01107) matrix(1 0 0 -1 0 850)" d="m375 725l0 0-375-375 375-374 0-1 1125 0 0 750-1125 0z" fill="#444" fill-opacity="0.3"/>
<path transform="translate(1454.2,229.22) scale(0.01476) matrix(1 0 0 -1 0 850)" d="m187 786l0 2-187-188 188-187 0 0 937 0 0 373-938 0z m0-499l0 1-187-188 188-188 0 0 937 0 0 376-938-1z" fill="#444" fill-opacity="0.7"/>
<g><rect x="1488.2" y="228" width="17.1" height="16.7" fill="#34457a"/>
<rect x="1491.1" y="231" width="2" height="2" fill="#6ec5b8"/>
<rect x="1491.1" y="234" width="2" height="2.6" fill="#5fb3ab"/>
<rect x="1491.1" y="237.4" width="2" height="5" fill="#ffffff"/>
<rect x="1494.3" y="231" width="2" height="2" fill="#6ec5b8"/>
<rect x="1494.2" y="234" width="2.2" height="8.4" fill="#d3d7e6"/>
<rect x="1497.5" y="231" width="2" height="2" fill="#6ec5b8"/>
<rect x="1497.5" y="234" width="2" height="2.6" fill="#5fb3ab"/>
<rect x="1497.5" y="237.4" width="2" height="5" fill="#ffffff"/>
<rect x="1500.7" y="231" width="2" height="2" fill="#6ec5b8"/>
<rect x="1500.6" y="234" width="2.2" height="8.4" fill="#d3d7e6"/>
</g>
<rect x="1222" y="224.1" width="20.8" height="21.6" fill="none" stroke="#c00000" stroke-width="2"/>
<rect x="1393" y="224.1" width="20.8" height="21.6" fill="none" stroke="#c55a11" stroke-width="2"/>
</svg>
<svg class="ov" width="1524" height="857" viewBox="0 0 1524 857">
 <!-- annotation arrows -->
 <path d="M152.20 24.00 L165.70 10.1 L165.70 17.2 L186.70 17.2 L186.70 30.7 L165.70 30.7 L165.70 37.9 Z" fill="#1b2a4e"/><path d="M154.67 24.00 L163.95 14.45 L163.95 18.95 L184.95 18.95 L184.95 28.95 L163.95 28.95 L163.95 33.55 Z" fill="#ff0000"/>
 <path d="M389.90 127.95 L402.50 115.2 L402.50 121.4 L417.70 121.4 L417.70 134.2 L402.50 134.2 L402.50 140.7 Z" fill="#14264a"/><path d="M392.30 127.95 L400.80 119.35 L400.80 123.10 L416.00 123.10 L416.00 132.50 L400.80 132.50 L400.80 136.55 Z" fill="#ffc000"/>
 <path d="M785.30 127.95 L797.90 115.2 L797.90 121.4 L813.10 121.4 L813.10 134.2 L797.90 134.2 L797.90 140.7 Z" fill="#14264a"/><path d="M787.70 127.95 L796.20 119.35 L796.20 123.10 L811.40 123.10 L811.40 132.50 L796.20 132.50 L796.20 136.55 Z" fill="#c55a11"/>
 <path d="M1178.90 127.90 L1191.80 114.8 L1191.80 121.4 L1207.10 121.4 L1207.10 134.2 L1191.80 134.2 L1191.80 141.0 Z" fill="#14264a"/><path d="M1181.30 127.90 L1190.10 118.97 L1190.10 123.10 L1205.40 123.10 L1205.40 132.50 L1190.10 132.50 L1190.10 136.83 Z" fill="#b40d9e"/>
</svg>
</body></html>
